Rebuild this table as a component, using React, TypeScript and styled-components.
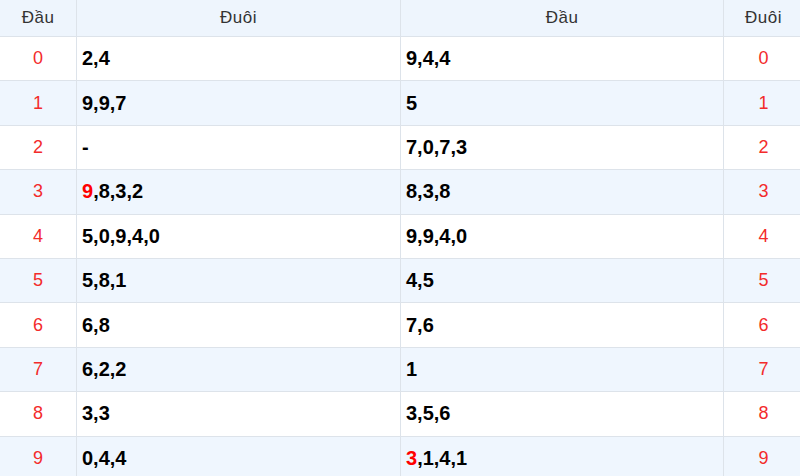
import styled, { createGlobalStyle } from 'styled-components'

const GlobalStyle = createGlobalStyle`
  body {
    margin: 0;
    background: #fff;
    font-family: 'Liberation Sans', Arial, sans-serif;
  }
`

const Table = styled.table`
  width: 800px;
  border-collapse: collapse;
  table-layout: fixed;
`
const HeadCell = styled.th<{ $w: number }>`
  width: ${(p) => p.$w}px;
  height: 36px;
  padding: 0;
  background: #eef5fd;
  color: #333;
  font-size: 17px;
  font-weight: normal;
  letter-spacing: 0.5px;
  text-align: center;
  border: 1px solid #dde3ea;
  border-top: 0;
  &:first-child {
    border-left: 0;
  }
  &:last-child {
    border-right: 0;
  }
`
const Row = styled.tr<{ $alt: boolean }>`
  background: ${(p) => (p.$alt ? '#eff6fe' : '#fff')};
`
const IndexCell = styled.td`
  height: 43.4px;
  padding: 0;
  text-align: center;
  color: #f32b2b;
  font-size: 18px;
  border: 1px solid #dde3ea;
  &:first-child {
    border-left: 0;
  }
  &:last-child {
    border-right: 0;
  }
`
const NumCell = styled.td`
  height: 43.4px;
  padding: 0 5px;
  color: #000;
  font-size: 20px;
  font-weight: bold;
  border: 1px solid #dde3ea;
`
const Hit = styled.span`
  color: #f00;
`

type Line = { head: string; tail: string; hitTail?: boolean; hitHead?: boolean }

const rows: Line[] = [
  { tail: '2,4', head: '9,4,4' },
  { tail: '9,9,7', head: '5' },
  { tail: '-', head: '7,0,7,3' },
  { tail: '9,8,3,2', head: '8,3,8', hitTail: true },
  { tail: '5,0,9,4,0', head: '9,9,4,0' },
  { tail: '5,8,1', head: '4,5' },
  { tail: '6,8', head: '7,6' },
  { tail: '6,2,2', head: '1' },
  { tail: '3,3', head: '3,5,6' },
  { tail: '0,4,4', head: '3,1,4,1', hitHead: true },
]

function Nums({ text, hit }: { text: string; hit?: boolean }) {
  if (!hit) return <>{text}</>
  return (
    <>
      <Hit>{text[0]}</Hit>
      {text.slice(1)}
    </>
  )
}

export default function App() {
  return (
    <>
      <GlobalStyle />
      <Table>
        <thead>
          <tr>
            <HeadCell $w={76}>Đầu</HeadCell>
            <HeadCell $w={323}>Đuôi</HeadCell>
            <HeadCell $w={322}>Đầu</HeadCell>
            <HeadCell $w={79}>Đuôi</HeadCell>
          </tr>
        </thead>
        <tbody>
          {rows.map((r, i) => (
            <Row key={i} $alt={i % 2 === 1}>
              <IndexCell>{i}</IndexCell>
              <NumCell>
                <Nums text={r.tail} hit={r.hitTail} />
              </NumCell>
              <NumCell>
                <Nums text={r.head} hit={r.hitHead} />
              </NumCell>
              <IndexCell>{i}</IndexCell>
            </Row>
          ))}
        </tbody>
      </Table>
    </>
  )
}
